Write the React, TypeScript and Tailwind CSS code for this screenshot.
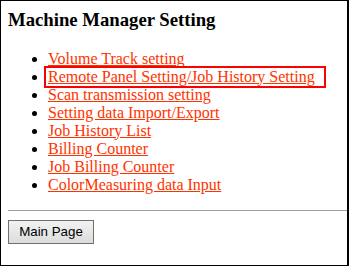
import React from "react";

const items = [
  "Volume Track setting",
  "Remote Panel Setting/Job History Setting",
  "Scan transmission setting",
  "Setting data Import/Export",
  "Job History List",
  "Billing Counter",
  "Job Billing Counter",
  "ColorMeasuring data Input",
];

export default function App() {
  return (
    <div
      className="relative w-[349px] h-[266px] bg-white border-black border-t border-l border-b border-r-2 overflow-hidden"
      style={{ fontFamily: '"Liberation Serif", "Times New Roman", serif' }}
    >
      <div className="pt-[8px] pl-[7px]">
        <h3 className="m-0 text-[18.72px] font-bold leading-[normal] text-black">
          Machine Manager Setting
        </h3>
        <ul className="mt-[18.5px] mb-0 pl-[40px] list-disc text-[16px] leading-[normal]">
          {items.map((t) => (
            <li key={t} className="text-black">
              <a href="#" className="text-[#ff3300] underline">
                {t}
              </a>
            </li>
          ))}
        </ul>
      </div>
      <div className="mt-[16px] ml-[7px] border-t border-[#a0a0a0]" />
      <div className="pl-[7px] mt-[9px]">
        <button
          className="w-[86px] h-[24px] border border-[#707070] bg-gradient-to-b from-[#f2f2f2] to-[#dcdcdc] text-[13.33px] leading-[normal] text-black flex items-center justify-center"
          style={{ fontFamily: '"Liberation Sans", Arial, sans-serif' }}
        >
          Main Page
        </button>
      </div>
      <div className="absolute left-[43px] top-[65px] w-[282px] h-[22px] border-2 border-[#ff0000] pointer-events-none" />
    </div>
  );
}
